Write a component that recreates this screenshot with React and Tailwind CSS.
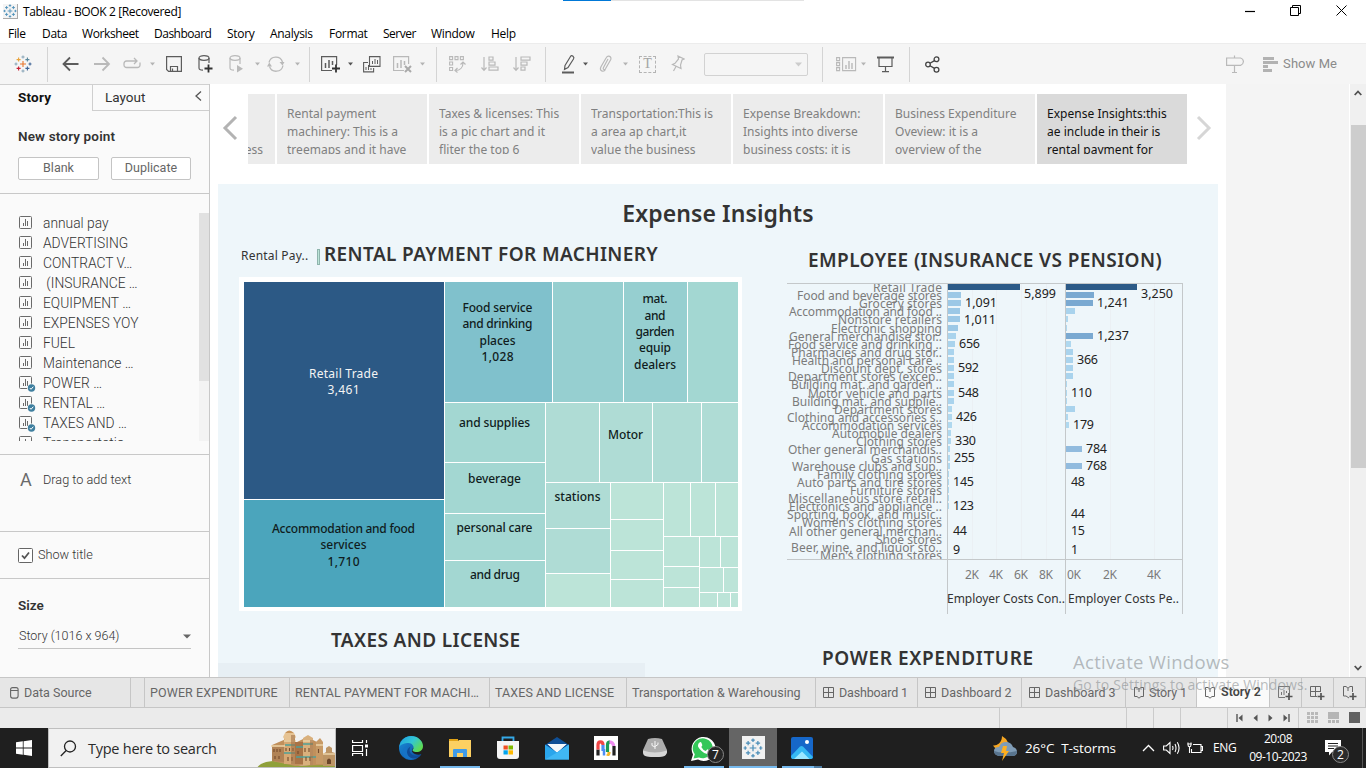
import React from "react";

/* ---------- small drawing helpers ---------- */

function Svg({ w, h, className = "", children }) {
  return (
    <svg width={w} height={h} viewBox={`0 0 ${w} ${h}`} fill="none" className={`block shrink-0 ${className}`}>
      {children}
    </svg>
  );
}

const Caret = ({ className = "", color = "#b4b4b4" }) => (
  <Svg w={5} h={4} className={className}><path d="M0 0.5h5L2.5 3.5z" fill={color} /></Svg>
);

const Sep = ({ className = "" }) => <div className={`h-[35px] w-px shrink-0 bg-[#d4d4d4] ${className}`} />;

function TableauMark({ size, colors, className = "" }) {
  const [a, b, c, d, e, f = a] = colors;
  const plus = (x, y, r, color, k) => (
    <path key={k} d={`M${x - r} ${y}h${2 * r}M${x} ${y - r}v${2 * r}`} stroke={color} strokeWidth="1.1" />
  );
  return (
    <svg width={size} height={size} viewBox="0 0 18 18" className={`block shrink-0 ${className}`}>
      {plus(9, 9, 3, a, 0)}
      {plus(9, 2, 1.6, b, 1)}
      {plus(9, 16, 1.6, b, 2)}
      {plus(2, 9, 1.5, b, 3)}
      {plus(16, 9, 1.5, c, 4)}
      {plus(4.6, 4.6, 2, f, 5)}
      {plus(13.4, 4.6, 2, d, 6)}
      {plus(4.6, 13.4, 2, e, 7)}
      {plus(13.4, 13.4, 2, c, 8)}
    </svg>
  );
}

/* ---------- title bar and menu ---------- */

function TitleBar() {
  return (
    <div className="relative flex h-[22px] items-center bg-white">
      <div className="ml-[3px] mt-[1px] border-b border-r border-[#aaa] bg-[#f4f4f4]">
        <TableauMark size={14} colors={["#4a8db8", "#4a8db8", "#4a8db8", "#4a8db8", "#4a8db8"]} />
      </div>
      <div className="ml-[5px] mt-[2px] whitespace-nowrap text-[12px] tracking-[-0.36px] text-black">Tableau - BOOK 2 [Recovered]</div>
      <div className="absolute left-[563px] top-0 flex h-[1px]">
        <div className="w-[48px] bg-[#0078d7]" />
        <div className="w-[193px] bg-[#e3e3e3]" />
      </div>
      <Svg w={11} h={11} className="ml-auto mr-[35px]"><path d="M1 5.5h10" stroke="#000" strokeWidth="1.2" /></Svg>
      <Svg w={11} h={11} className="mb-[2px] mr-[35px]">
        <path d="M2.5 2.5v-2h8v8h-2M.5 2.5h8v8h-8z" stroke="#000" />
      </Svg>
      <Svg w={11} h={11} className="mb-[2px] mr-[19px]"><path d="M.5 .5l10 10M10.5 .5l-10 10" stroke="#000" /></Svg>
    </div>
  );
}

function MenuBar() {
  return (
    <div className="flex h-[21px] items-center whitespace-nowrap bg-white pl-2 pt-[3px] text-[12px] tracking-[-0.3px] text-black">
      <span className="w-[34px]">File</span>
      <span className="w-[40px]">Data</span>
      <span className="w-[72px] tracking-[-0.4px]">Worksheet</span>
      <span className="w-[73px] tracking-[-0.5px]">Dashboard</span>
      <span className="w-[43px]">Story</span>
      <span className="w-[59px]">Analysis</span>
      <span className="w-[54px]">Format</span>
      <span className="w-[48px] tracking-[-0.5px]">Server</span>
      <span className="w-[60px]">Window</span>
      <span>Help</span>
    </div>
  );
}

/* ---------- toolbar ---------- */

function ToolBar() {
  const D = "#5c5c5c";
  const L = "#b9b9b9";
  return (
    <div className="flex h-[41px] items-center border-t border-[#ececec] bg-[#f5f5f5]">
      <TableauMark size={18} className="ml-[14px]" colors={["#e8762c", "#8aa7b8", "#3f6496", "#59879b", "#c72035", "#e8a33c"]} />
      <Sep className="ml-[15px]" />
      <Svg w={17} h={16} className="ml-[14px]"><path d="M16.5 8H1.5M8 1.5L1.5 8L8 14.5" stroke={D} strokeWidth="1.8" /></Svg>
      <Svg w={17} h={16} className="ml-[15px]"><path d="M0 8H15M8.5 1.5L15 8L8.5 14.5" stroke={L} strokeWidth="1.8" /></Svg>
      <Svg w={19} h={14} className="ml-[12px]">
        <path d="M6 10.5H3.5A2.5 2.5 0 0 1 1 8V6.5A2.500 2.500 0 0 1 3.500 4H14M11 1l3 3-3 3M17 5.500V8A2.500 2.500 0 0 1 14.500 10.500H5" stroke={L} strokeWidth="1.3" />
      </Svg>
      <Caret className="ml-[8px]" />
      <Svg w={16} h={16} className="ml-[11px]">
        <path d="M.6.6h14.800v14.800H2.600L.6 13.400zM4.500 15v-4.500h7V15M6.500 12.500V15" stroke={D} strokeWidth="1.2" />
      </Svg>
      <Svg w={16} h={18} className="ml-[16px]">
        <ellipse cx="6" cy="3" rx="5" ry="2.300" stroke={D} strokeWidth="1.200" />
        <path d="M1 3v10c0 1 1.500 2.200 4 2.200M11 3v5" stroke={D} strokeWidth="1.200" />
        <path d="M6.500 13.500h8M10.500 9.500v8" stroke="#333" strokeWidth="1.800" />
      </Svg>
      <Svg w={15} h={18} className="ml-[15px]">
        <ellipse cx="6" cy="3" rx="5" ry="2.300" stroke={L} strokeWidth="1.200" />
        <path d="M1 3v10c0 1 1.500 2.200 4 2.200M11 3v6" stroke={L} strokeWidth="1.200" />
        <path d="M8 10l6 3.700-6 3.800z" fill={L} />
      </Svg>
      <Caret className="ml-[11px]" />
      <Svg w={18} h={16} className="ml-[7px]">
        <path d="M2 6.500A7 7 0 0 1 15.500 6M16 9.500A7 7 0 0 1 2.500 10.500" stroke={L} strokeWidth="1.300" />
        <path d="M12.500 6h5l-2 3.500zM0 10.500h5l-2.700-4z" fill={L} />
      </Svg>
      <Caret className="ml-[10px]" />
      <Sep className="ml-[9px]" />
      <Svg w={20} h={18} className="ml-[11px]">
        <path d="M11 15.500H.6V1.600h15V10" stroke={D} strokeWidth="1.200" />
        <path d="M4.500 13V8M8 13V5M11.500 10V6" stroke={D} strokeWidth="1.500" />
        <path d="M11 13.500h8M15 9.500v8" stroke="#333" strokeWidth="1.800" />
      </Svg>
      <Caret className="ml-[7px]" color="#555" />
      <Svg w={18} h={17} className="ml-[10px]">
        <path d="M6.500.6h10.500v9.800H6.500zM5 6.500H.6v9.400h10V12" stroke={D} strokeWidth="1.100" />
        <path d="M9.500 8V5M12 8V3M14.500 8V4M3 14v-3M5.500 14v-5M8 14v-2" stroke={D} />
      </Svg>
      <Svg w={20} h={18} className="ml-[12px]">
        <path d="M11 15.500H.6V1.600h15V9" stroke={L} strokeWidth="1.200" />
        <path d="M4.500 13V8M8 13V5M11.500 10V6" stroke={L} strokeWidth="1.500" />
        <path d="M12 11l6 6M18 11l-6 6" stroke="#aaa" strokeWidth="2" />
      </Svg>
      <Caret className="ml-[7px]" />
      <Sep className="ml-[11px]" />
      <Svg w={17} h={17} className="ml-[12px]">
        <path d="M.6.6h3v3h-3zM6 .6h3v3H6zM11.400 .6h3v3h-3zM.6 6h3v3h-3zM.6 11.500h3v3h-3z" stroke={L} strokeWidth="1.100" />
        <path d="M6.500 14.500c4.500 0 7.500-3 7.500-7.500M11.500 8.500L14 6l2.500 2.500M8.500 12l-2.500 2.500 2.500 2" stroke={L} strokeWidth="1.200" />
      </Svg>
      <Svg w={18} h={16} className="ml-[15px]">
        <path d="M3 1v13M.5 11.500L3 14.300l2.500-2.800M8 1h4v3.200H8zM8 6h6v3.200H8zM8 11h9v3.200H8z" stroke={L} strokeWidth="1.200" />
      </Svg>
      <Svg w={18} h={16} className="ml-[14px]">
        <path d="M3 1v13M.5 11.500L3 14.300l2.500-2.800M8 1h9v3.200H8zM8 6h6v3.200H8zM8 11h4v3.200H8z" stroke={L} strokeWidth="1.200" />
      </Svg>
      <Sep className="ml-[14px]" />
      <Svg w={14} h={19} className="ml-[16px]">
        <path d="M3 10.500L8.500 1.500Q9.500 0 11 1.300T11.500 4L6 12.500l-3.500 2z" stroke={D} strokeWidth="1.200" />
        <path d="M0 17.500h12" stroke={D} strokeWidth="2" />
      </Svg>
      <Caret className="ml-[7px]" color="#555" />
      <Svg w={13} h={18} className="ml-[11px]">
        <path d="M9 4L4.500 12.500c-1 2 1 2.800 2 1.200L11.500 5c1.800-3.500-2.500-5.500-4.300-2.200L2 11.800c-2 4 2.500 6 4.500 2.700" stroke={L} strokeWidth="1.200" />
      </Svg>
      <Caret className="ml-[11px]" />
      <div className="ml-[11px] flex h-[17px] w-[17px] shrink-0 items-center justify-center border border-dashed border-[#b4b4b4] font-['Liberation_Serif',serif] text-[14px] leading-none text-[#a4a4a4]">T</div>
      <Svg w={14} h={18} className="ml-[15px]">
        <path d="M7 1l6 3-2 1-1.500 5 .5 3.500-8.500-4L4 8.300 7.500 4zM5 11.500L2.500 16" stroke={L} strokeWidth="1.200" />
      </Svg>
      <div className="ml-[19px] flex h-[23px] w-[104px] shrink-0 items-center justify-end rounded-[2px] border border-[#d2d2d2] pr-[5px]">
        <Svg w={7} h={5}><path d="M0 .5h7L3.500 4.500z" fill="#ccc" /></Svg>
      </div>
      <Sep className="ml-[14px]" />
      <Svg w={21} h={15} className="ml-[13px]">
        <path d="M.6.6h3v3h-3zM.6 5.600h3v3h-3zM.6 10.600h3v3h-3zM6.600.6h13v13h-13z" stroke={L} strokeWidth="1.100" />
        <path d="M10 12V8M13 12V4M16 12V6" stroke={L} strokeWidth="1.400" />
      </Svg>
      <Caret className="ml-[4px]" />
      <Svg w={17} h={17} className="ml-[11px]">
        <path d="M0 1.500h17" stroke={D} strokeWidth="2" />
        <path d="M2 2v8.500h13V2M8.500 11v5M5 15.700h7" stroke={D} strokeWidth="1.200" />
      </Svg>
      <Sep className="ml-[15px]" />
      <Svg w={15} h={17} className="ml-[15px]">
        <g stroke="#444" strokeWidth="1.300">
          <circle cx="3" cy="8.500" r="2.300" /><circle cx="11.500" cy="3.300" r="2.400" /><circle cx="11.500" cy="13.700" r="2.400" />
          <path d="M5 7.300l4.500-2.700M5 9.700l4.500 2.700" />
        </g>
      </Svg>
      <Svg w={18} h={18} className="ml-auto">
        <path d="M.6 3h14q3 1 2.800 3.700-.2 2.700-2.800 3.700H.6zM8.500 .5V3M8.500 10.500v7M6 17.500h5" stroke={L} strokeWidth="1.200" />
      </Svg>
      <Svg w={15} h={15} className="ml-[19px]">
        <path d="M0 0h11v3H0zM0 4h15v3H0zM0 8h5v3H0zM0 12h9v3H0z" fill="#b2b2b2" />
      </Svg>
      <span className="ml-[5px] mr-[29px] whitespace-nowrap font-['Roboto',sans-serif] text-[13px] tracking-[0.05px] text-[#8b8b8b]">Show Me</span>
    </div>
  );
}

/* ---------- side pane ---------- */

const sheets = [
  ["annual pay"], ["ADVERTISING"], ["CONTRACT V…"], ["\u00a0(INSURANCE …"], ["EQUIPMENT …"], ["EXPENSES YOY"],
  ["FUEL"], ["Maintenance …"], ["POWER …", true], ["RENTAL …", true], ["TAXES AND …", true], ["Transportatio…"],
];

const SheetIcon = ({ used }) => (
  <Svg w={18} h={18}>
    <rect x="1.500" y="2.500" width="12" height="12" rx="1" stroke="#6a6a6a" />
    <path d="M5.500 12V9M7.500 12V5M9.500 12V7" stroke="#6a6a6a" />
    {used && <g><circle cx="13.500" cy="14" r="4.500" fill="#fafafa" /><circle cx="13.500" cy="14" r="3.700" fill="#3f7f9f" /><path d="M11.800 14l1.200 1.300 2.300-2.600" stroke="#fff" /></g>}
  </Svg>
);

function SidePane() {
  return (
    <div className="flex w-[210px] shrink-0 flex-col border-r border-[#c8c8c8] bg-[#fafafa] font-['Roboto',sans-serif] font-light text-[#333]">
      <div className="flex h-[27px] border-t border-[#d0d0d0] text-[13.5px]">
        <div className="w-[92px] pl-[18px] pt-[2px] font-bold tracking-[0.2px] text-[#111]">Story</div>
        <div className="flex flex-1 items-start justify-between border-b border-l border-[#cfcfcf] pl-[12px] pt-[2px] text-[13.500px] font-normal">
          <span>Layout</span>
          <Svg w={7} h={10} className="mr-[7px] mt-[4px]"><path d="M6 .5L1 5l5 4.500" stroke="#555" strokeWidth="1.300" /></Svg>
        </div>
      </div>
      <div className="mt-[15px] h-[21px] pl-[18px] text-[13.500px] font-semibold leading-[20px] tracking-[0.15px] text-[#333]">New story point</div>
      <div className="mt-[10px] flex gap-[12px] pl-[18px] text-[12.500px] font-normal text-[#666]">
        <div className="h-[23px] w-[81px] rounded-[2px] border border-[#c4c4c4] bg-white text-center leading-[20px]">Blank</div>
        <div className="h-[23px] w-[80px] rounded-[2px] border border-[#c4c4c4] bg-white text-center leading-[20px]">Duplicate</div>
      </div>
      <div className="mt-[13px] flex h-[262px] border-b border-t border-[#c8c8c8] pb-[13px] pt-[19px]">
        <div className="flex-1 overflow-hidden pl-[18px]">
          {sheets.map(([name, used]) => (
            <div key={name} className="flex h-[20px] items-center whitespace-nowrap text-[13.800px]">
              <SheetIcon used={used} />
              <span className="ml-[7px] mt-[1px]">{name}</span>
            </div>
          ))}
        </div>
        <div className="w-[10px] bg-[#f3f3f3]"><div className="h-[168px] bg-[#e1e1e1]" /></div>
      </div>
      <div className="flex h-[77px] items-start border-b border-[#c8c8c8] pl-[20px] pt-[15px] text-[12.700px] leading-[20px]">
        <span className="w-[23px] text-[18px] font-normal text-[#6a6a6a]">A</span>
        <span>Drag to add text</span>
      </div>
      <div className="flex h-[47px] items-center border-b border-[#c8c8c8] pl-[18px] text-[12.700px]">
        <Svg w={15} h={15}><rect x=".5" y=".5" width="14" height="14" rx="1" stroke="#666" fill="#fff" /><path d="M4 7.500l2.500 2.700L11 4.500" stroke="#555" strokeWidth="1.800" /></Svg>
        <span className="ml-[5px]">Show title</span>
      </div>
      <div className="mt-[16px] pl-[18px] text-[13.500px] font-semibold leading-[20px]">Size</div>
      <div className="ml-[18px] mt-[10px] flex h-[24px] w-[173px] items-center justify-between border-b border-[#c4c4c4] pl-[1px] text-[12.500px]">
        <span>Story (1016 x 964)</span>
        <Svg w={8} h={5}><path d="M0 .5h8L4 4.500z" fill="#666" /></Svg>
      </div>
    </div>
  );
}

/* ---------- story navigator ---------- */

const points = [
  ["Rental payment", "machinery: This is a", "treemaps and it have"],
  ["Taxes & licenses: This", "is a pic chart and it", "fliter the top 6"],
  ["Transportation:This is", "a area ap chart,it", "value the business"],
  ["Expense Breakdown:", "Insights into diverse", "business costs: it is"],
  ["Business Expenditure", "Oveview: it is a", "overview of the"],
  ["Expense Insights:this", "ae include in their is", "rental payment for"],
];

function Navigator() {
  return (
    <div className="flex h-[100px] pt-[10px] font-['Noto_Sans',sans-serif] text-[12px] leading-[18px]">
      <Svg w={16} h={26} className="ml-[12px] mt-[21px]"><path d="M14 2L3 13l11 11" stroke="#b3b3b3" strokeWidth="3" /></Svg>
      <div className="ml-[10px] flex h-[70px] gap-[2px]">
        <div className="w-[27px] overflow-hidden bg-[#ececec] pt-[11px] text-[#808080]">
          <div className="mt-[36px] flex h-[13px] w-[15px] justify-end overflow-hidden">ess</div>
        </div>
        {points.map((lines, i) => (
          <div key={i} className={i === 5 ? "w-[150px] bg-[#dadada] pl-[10px] pt-[11px] text-[#111]" : "w-[150px] bg-[#ececec] pl-[10px] pt-[11px] text-[#808080]"}>
            <div className="h-[49px] overflow-hidden whitespace-nowrap tracking-[0.02px]">
              {lines.map((l) => <div key={l}>{l}</div>)}
            </div>
          </div>
        ))}
      </div>
      <Svg w={16} h={26} className="ml-[9px] mt-[21px]"><path d="M2 2l11 11L2 24" stroke="#d6d6d6" strokeWidth="3" /></Svg>
    </div>
  );
}

/* ---------- treemap ---------- */

const C = { a: "#2c5985", b: "#4ba5bc", c: "#80c1cc", d: "#96cfd0", e: "#a3d7d2", f: "#afdcd5", g: "#bce4d8" };

// left, top, right, bottom, colour
const cells = [
  [244, 282, 444, 499, C.a], [244, 500, 444, 607, C.b], [445, 282, 552, 402, C.c], [553, 282, 623, 402, C.d],
  [624, 282, 687, 402, C.d], [688, 282, 738, 402, C.e], [445, 403, 545, 462, C.e], [445, 463, 545, 513, C.e],
  [445, 514, 545, 560, C.e], [445, 561, 545, 607, C.e], [546, 403, 599, 482, C.f], [600, 403, 652, 482, C.f],
  [653, 403, 701, 482, C.f], [702, 403, 738, 482, C.f], [546, 483, 610, 528, C.f], [546, 529, 610, 573, C.f],
  [546, 574, 610, 607, C.g], [611, 483, 663, 519, C.g], [611, 520, 663, 550, C.g], [611, 551, 663, 579, C.g],
  [611, 580, 663, 607, C.g], [664, 483, 690, 536, C.g], [691, 483, 715, 536, C.g], [716, 483, 738, 536, C.g],
  [664, 537, 699, 566, C.g], [664, 567, 699, 587, C.g], [664, 588, 699, 607, C.g], [700, 537, 720, 567, C.g],
  [721, 537, 738, 567, C.g], [700, 568, 723, 592, C.g], [724, 568, 738, 592, C.g], [700, 593, 717, 607, C.g],
  [718, 593, 730, 607, C.g], [731, 593, 738, 607, C.g],
];

// centre x, baseline, width, text
const cellLabels = [
  [343.5, 378, 69, "Retail Trade", "#f4f4f4"], [343.5, 394, 32, "3,461", "#f4f4f4"],
  [343.5, 533, 143, "Accommodation and food"], [343.5, 549, 46, "services"], [343.5, 566, 32, "1,710"],
  [497.5, 312, 70, "Food service"], [497.5, 328, 70, "and drinking"], [497.5, 345, 36, "places"], [497.5, 361, 32, "1,028"],
  [655, 303, 25, "mat."], [655, 320, 21, "and"], [655, 336, 39, "garden"], [655, 352, 32, "equip"], [655, 369, 42, "dealers"],
  [494.5, 427, 71, "and supplies"], [494.5, 483, 53, "beverage"], [494.5, 532, 76, "personal care"], [495, 579, 50, "and drug"],
  [625.5, 439, 35, "Motor"], [577.5, 501, 46, "stations"],
];

function Treemap() {
  return (
    <svg width="503" height="334" viewBox="239 277 503 334" className="block bg-white font-['Noto_Sans',sans-serif] text-[12px]">
      {cells.map(([l, t, r, b, fill], i) => <rect key={i} x={l} y={t} width={r - l} height={b - t} fill={fill} />)}
      {cellLabels.map(([x, y, w, text, fill = "#101c20"]) => (
        <text key={text + y} x={x - w / 2} y={y} textLength={w} fill={fill} fontWeight={fill === "#101c20" ? 500 : 400}>{text}</text>
      ))}
    </svg>
  );
}

/* ---------- bar chart ---------- */

// name, left edge of label, insurance bar, pension bar
const rows = [
  ["Retail Trade", 873, 72, 71], ["Food and beverage stores", 797, 13, 28], ["Grocery stores", 859, 13, 27],
  ["Accommodation and food ..", 789, 12, 9], ["Nonstore retailers", 838, 12, 2], ["Electronic shopping", 831, 10, 1],
  ["General merchandise stor..", 789, 8, 27], ["Food service and drinking ..", 788, 7, 5], ["Pharmacies and drug stor..", 791, 6, 7],
  ["Health and personal care ..", 792, 6, 7], ["Discount dept. stores", 821, 6, 7], ["Department stores (excep..", 788, 6, 7],
  ["Building mat. and garden ..", 791, 6, 1], ["Motor vehicle and parts", 808, 6, 1], ["Building mat. and supplie..", 792, 6, 1],
  ["Department stores", 834, 4, 9], ["Clothing and accessories s..", 787, 4, 2], ["Accommodation services", 802, 4, 3],
  ["Automobile dealers", 832, 3, 0], ["Clothing stores", 856, 3, 0], ["Other general merchandis..", 788, 2, 16],
  ["Gas stations", 871, 2, 0], ["Warehouse clubs and sup..", 792, 2, 16], ["Family clothing stores", 817, 1, 0],
  ["Auto parts and tire stores", 797, 1, 0], ["Furniture stores", 850, 1, 0], ["Miscellaneous store retail..", 788, 1, 0],
  ["Electronics and appliance ..", 789, 1, 0], ["Sporting, book, and  music..", 787, 0, 0], ["Women's clothing stores", 802, 0, 0],
  ["All other general merchan..", 789, 0, 0], ["Shoe stores", 876, 0, 0], ["Beer, wine, and liquor sto..", 791, 0, 0],
  ["Men's clothing stores", 820, 0, 0],
];

// left, centre y, width, text
const values = [
  [1024, 294, 32, "5,899"], [965, 303, 32, "1,091"], [964, 320, 32, "1,011"], [959, 344, 21, "656"], [958, 368, 21, "592"],
  [958, 393, 21, "548"], [956, 417, 21, "426"], [955, 441, 21, "330"], [954, 458, 21, "255"], [953, 482, 21, "145"],
  [953, 506, 21, "123"], [953, 531, 14, "44"], [953, 550, 7, "9"], [1141, 294, 32, "3,250"], [1097, 303, 32, "1,241"],
  [1097, 336, 32, "1,237"], [1077, 360, 21, "366"], [1071, 393, 21, "110"], [1073, 425, 21, "179"], [1086, 449, 21, "784"],
  [1086, 466, 21, "768"], [1071, 482, 14, "48"], [1071, 514, 14, "44"], [1071, 531, 14, "15"], [1071, 550, 7, "1"],
];

const ticks = [[965, 14, "2K"], [989, 14, "4K"], [1014, 14, "6K"], [1039, 14, "8K"], [1067, 14, "0K"], [1103, 14, "2K"], [1147, 14, "4K"]];

const shade = (w) => (w > 60 ? "#2c5a87" : w > 20 ? "#7aa9d1" : w > 14 ? "#91bbde" : w > 9 ? "#9cc8e6" : w > 5 ? "#a9d3ed" : "#afd8ef");

function BarChart() {
  return (
    <svg width="396" height="331" viewBox="787 283 396 331" className="block font-['Noto_Sans',sans-serif]">
      <path d="M972.500 284v275M996.500 284v275M1021.500 284v275M1046.500 284v275M1110.500 284v275M1154.500 284v275" stroke="#ebf0f4" />
      <clipPath id="plot"><rect x="780" y="284" width="403" height="275" /></clipPath>
      <g clipPath="url(#plot)">
        {rows.map(([name, left, a, b], i) => {
          const y = 284 + Math.round(i * 8.12);
          return (
            <g key={name}>
              <rect x="948" y={y} width={a} height="6" fill={shade(a)} />
              <rect x="1066" y={y} width={b} height="6" fill={shade(b)} />
              <text x={left} y={y + 8} textLength={942 - left} fontSize="12" fill="#7b7b7b">{name}</text>
            </g>
          );
        })}
      </g>
      {values.map(([x, y, w, t]) => <text key={x + "-" + y} x={x} y={y + 4} textLength={w} fontSize="12.500" fill="#222">{t}</text>)}
      <path d="M787 283.500h396M787 559.500h396M947.500 283v331M1065.500 283v331M1182.500 283v331" stroke="#c4c8ca" />
      {ticks.map(([x, w, t]) => <text key={x} x={x} y="579" textLength={w} fontSize="12" fill="#7a7a7a">{t}</text>)}
      <text x="947" y="603" textLength="118" fontSize="12" fill="#333">Employer Costs Con..</text>
      <text x="1068" y="603" textLength="111" fontSize="12" fill="#333">Employer Costs Pe..</text>
    </svg>
  );
}

/* ---------- dashboard canvas ---------- */

function Canvas() {
  return (
    <div className="mx-[8px] h-[493px] w-[1000px] overflow-hidden bg-[#eef6fa] font-['Noto_Sans',sans-serif] text-[#333]">
      <div className="h-[60px] pt-[11px] text-center text-[23px] font-semibold leading-[36px] tracking-[0.1px]">Expense Insights</div>
      <div className="flex">
        <div className="w-[569px]">
          <div className="flex h-[33px] items-start pl-[23px]">
            <span className="w-[76px] whitespace-nowrap pt-[3px] text-[12px] leading-[18px] tracking-[0.2px]">Rental Pay..</span>
            <span className="mt-[5px] h-[16px] w-[3px] border border-[#8fb5ad] bg-[#bce4d8]" />
            <span className="ml-[4px] whitespace-nowrap text-[19px] font-semibold leading-[20px] tracking-[0.38px]">RENTAL PAYMENT FOR MACHINERY</span>
          </div>
          <div className="pl-[21px]"><Treemap /></div>
          <div className="mt-[17px] pl-[113px] text-[19px] font-semibold leading-[24px] tracking-[0.37px]">TAXES AND LICENSE</div>
          <div className="mt-[11px] h-[14px] w-[427px] bg-[#e7eff4]" />
        </div>
        <div className="w-[431px]">
          <div className="h-[39px] whitespace-nowrap pl-[21px] pt-[4px] text-[19px] font-semibold leading-[24px] tracking-[0.41px]">EMPLOYEE (INSURANCE VS PENSION)</div>
          <BarChart />
          <div className="mt-[32px] pl-[35px] text-[19px] font-semibold leading-[24px] tracking-[0.62px]">POWER EXPENDITURE</div>
        </div>
      </div>
    </div>
  );
}

/* ---------- sheet tabs ---------- */

const GridIcon = () => <Svg w={11} h={11}><path d="M.5.5h10v10H.5zM5.500.5v10M.5 5.500h10" stroke="#666" /></Svg>;
const BookIcon = () => <Svg w={12} h={13}><path d="M1.500 1.500H4L6 3.200 8 1.500h2.500v9H8L6 12.200 4 10.500H1.500zM6 3.200V6" stroke="#666" /></Svg>;
const Plus = () => <path d="M7.500 10.500h7M11 7v7" stroke="#555" strokeWidth="1.700" />;

function SheetTabs() {
  const tab = "flex shrink-0 items-center whitespace-nowrap border-r border-[#c6c6c6]";
  return (
    <div className="flex h-[31px] border-b border-t border-[#c6c6c6] bg-[#e6e6e6] font-['Roboto',sans-serif] text-[12.500px] text-[#666]">
      <div className={`${tab} w-[131px] pl-[10px]`}>
        <Svg w={9} h={12}><rect x=".6" y=".6" width="7.500" height="10.500" rx="2" stroke="#666" strokeWidth="1.100" /><path d="M.6 3.500h7.500" stroke="#666" /></Svg>
        <span className="ml-[5px] mt-[1px]">Data Source</span>
      </div>
      <div className={`${tab} w-[14px]`} />
      <div className={`${tab} w-[145px] pl-[5px] pt-[1px] tracking-[0.1px]`}>POWER EXPENDITURE</div>
      <div className={`${tab} w-[200px] pl-[5px] pt-[1px] tracking-[0.08px]`}>RENTAL PAYMENT FOR MACHI…</div>
      <div className={`${tab} w-[137px] pl-[5px] pt-[1px] tracking-[0.08px]`}>TAXES AND LICENSE</div>
      <div className={`${tab} w-[189px] pl-[5px] pt-[1px]`}>Transportation &amp; Warehousing</div>
      <div className={`${tab} w-[102px] gap-[5px] pl-[7px]`}><GridIcon /><span className="mt-[1px] tracking-[-0.15px]">Dashboard 1</span></div>
      <div className={`${tab} w-[104px] gap-[5px] pl-[7px]`}><GridIcon /><span className="mt-[1px]">Dashboard 2</span></div>
      <div className={`${tab} w-[104px] gap-[5px] pl-[7px]`}><GridIcon /><span className="mt-[1px]">Dashboard 3</span></div>
      <div className={`${tab} w-[71px] gap-[4px] pl-[7px]`}><BookIcon /><span className="mt-[1px] tracking-[-0.15px]">Story 1</span></div>
      <div className={`${tab} w-[73px] gap-[5px] bg-[#fafafa] pl-[7px] font-semibold text-[#444]`}><BookIcon /><span>Story 2</span></div>
      <div className={`${tab} w-[32px] justify-center pt-[2px]`}>
        <Svg w={15} h={15}><path d="M7 11.500H.5V.5h11V7M3.500 9V6M6 9V4M8.500 7V5" stroke="#777" /><Plus /></Svg>
      </div>
      <div className={`${tab} w-[32px] justify-center pt-[2px]`}>
        <Svg w={15} h={15}><path d="M7 10.500H.5V.5h10V6M5.500.5v10M.5 5.500h10" stroke="#666" /><Plus /></Svg>
      </div>
      <div className={`${tab} w-[32px] justify-center pt-[2px]`}>
        <Svg w={15} h={15}><path d="M7 12L4 10H1.500V.5H4L6 2.200 8 .5h2.500V6M6 2.200V5" stroke="#666" /><Plus /></Svg>
      </div>
    </div>
  );
}

function StatusBar() {
  const cell = "shrink-0 border-r border-[#cbcbcb]";
  return (
    <div className="flex h-[20px] bg-[#ebebeb]">
      <div className={`${cell} w-[1000px]`} />
      <div className={`${cell} w-[127px]`} />
      <div className={`${cell} w-[27px]`} />
      <div className={`${cell} w-[27px]`} />
      <div className={`${cell} w-[47px]`} />
      <div className={`${cell} flex w-[71px] items-center justify-between px-[8px] pb-[1px]`}>
        <Svg w={7} h={8}><path d="M1 0v8" stroke="#555" strokeWidth="1.400" /><path d="M6.500 .5v7L2.500 4z" fill="#555" /></Svg>
        <Svg w={5} h={8}><path d="M4.500 .5v7L.5 4z" fill="#555" /></Svg>
        <Svg w={5} h={8}><path d="M.5 .5v7L4.500 4z" fill="#555" /></Svg>
        <Svg w={7} h={8}><path d="M6 0v8" stroke="#555" strokeWidth="1.400" /><path d="M.5 .5v7L4.500 4z" fill="#555" /></Svg>
      </div>
      <div className="flex flex-1 items-center justify-between pb-[1px] pl-[8px] pr-[6px]">
        <Svg w={11} h={11}>{[0, 4, 8].map((y) => [0, 4, 8].map((x) => <rect key={x + y * 9} x={x} y={y} width="3" height="3" fill="#b9b9b9" />))}</Svg>
        <Svg w={11} h={11}><path d="M0 0h11v7H0zM0 8h3v3H0zM4 8h3v3H4zM8 8h3v3H8z" fill="#b5b5b5" /></Svg>
        <Svg w={11} h={11}><path d="M0 0h11v11H0z" fill="#616161" /></Svg>
      </div>
    </div>
  );
}

/* ---------- taskbar ---------- */

function Castle() {
  return (
    <svg width="80" height="38" viewBox="256 729 80 38" className="block shrink-0">
      <path d="M258 768q3-6 16-7 14 0 28 5l34-4v6z" fill="#8fa03a" />
      <path d="M273 745l14-6 9 4 12-6 10 5 6 6v17l-28 1-23-5z" fill="#c0905c" />
      <path d="M273 747h13v15l-13-1z" fill="#b08255" />
      <path d="M285 737h11v27h-11z" fill="#d6a873" />
      <path d="M286 733h9l2 4-2 3h-9l-2-3z" fill="#e6c393" />
      <path d="M286 733q4-5 9 0z" fill="#c79358" />
      <path d="M304 738l5-3 5 3v27h-10z" fill="#d9b07c" />
      <path d="M296 742h8v22h-8z" fill="#a87346" />
      <path d="M317 742l4-4 3 4v22h-7z" fill="#c79a66" />
      <path d="M324 754l3-2v-4l3-2 3 2v4l3 1v13h-12z" fill="#bd9565" />
      <path d="M286 745h10M285 753h11M297 747h7M304 744h10M297 757h20" stroke="#4fa098" strokeWidth="1.300" />
      <path d="M272 746h14M285 741h12M304 741h10M317 745h7M324 754h12" stroke="#ecd2a6" strokeWidth="1.400" />
      <path d="M275 749v3M278 749v3M281 749v3M287 748v3M290.500 748v3M294 748v3M306 748v4M310 748v4M299 751v3M319.500 749v4M276 756v3M280 756v3M289 757v4M293 757v4M307 757v4M311 757v4" stroke="#754b2d" strokeWidth="1.100" />
      <path d="M328 764v-4q2-3 4 0v4z" fill="#6b4529" />
      <path d="M292 735v29h4v-29zM311 740v25h3v-25z" fill="#9c6b43" opacity=".55" />
    </svg>
  );
}

function TaskBar() {
  return (
    <div className="flex h-[40px] items-center bg-[#1f1f1f] text-white">
      <Svg w={16} h={16} className="ml-[16px]"><path d="M0 2.300l6.800-1v6.200H0zM7.600 1.200L16 0v7.500H7.600zM0 8.400h6.800v6.300L0 13.700zM7.600 8.400H16V16l-8.400-1.200z" fill="#fff" /></Svg>
      <div className="ml-[16px] flex h-[40px] w-[288px] items-center border border-[#bfbfbf] bg-[#f1f1f1]">
        <Svg w={17} h={17} className="ml-[11px]"><circle cx="10" cy="6.500" r="5.500" stroke="#222" strokeWidth="1.300" /><path d="M6.200 10.500L.8 16" stroke="#222" strokeWidth="1.300" /></Svg>
        <span className="ml-[11px] w-[167px] whitespace-nowrap pt-[1px] text-[14.500px] tracking-[-0.25px] text-[#2b2b2b]">Type here to search</span>
        <Castle />
      </div>
      <Svg w={17} h={16} className="ml-[16px]">
        <path d="M.6 0v2.500h9.900V0M.6 5.500h9.900v6H.6zM.6 16v-2.500h9.900V16M14.500 0v3M14.500 9v7" stroke="#fff" strokeWidth="1.200" />
        <rect x="13" y="4.500" width="3" height="3" fill="#fff" />
      </Svg>
      <Svg w={24} h={24} className="ml-[30px]">
        <defs>
          <linearGradient id="edgeTop" x1="0" y1="0" x2="1" y2=".6"><stop stopColor="#1b9ee2" /><stop offset=".55" stopColor="#33c6d4" /><stop offset="1" stopColor="#5edb52" /></linearGradient>
          <linearGradient id="edgeLow" x1="0" y1="0" x2="1" y2="1"><stop stopColor="#1b8fdc" /><stop offset="1" stopColor="#0c4a9c" /></linearGradient>
        </defs>
        <circle cx="12" cy="12" r="12" fill="url(#edgeLow)" />
        <path d="M24 17.500C21 19.500 15 19 13 15.500L14 12l10.500-2z" fill="#1f1f1f" />
        <path d="M.3 11C1.500 3.500 7 0 12 0c7 0 12 5 12 10 0 4-3 6-6.500 6-3 0-4.500-1-3.500-2.500C16 10.500 13 7 9.500 7 6 7 2 8 .3 11z" fill="url(#edgeTop)" />
        <path d="M9.500 9.500q-3 4-1 8.500 3 5.500 9 4-5 3-10.500.500Q1 18 5 12q2-2.500 4.500-2.500z" fill="#1673c6" />
        <path d="M11.500 10.500q-2.500 5 1.500 8 4 2.500 9 0-3.500 4-8 4-5-1-6-6 0-4 3.500-6z" fill="#0f4c98" />
      </Svg>
      <div className="ml-[17px] flex h-[40px] w-[40px] flex-col items-center">
        <Svg w={24} h={22} className="mt-[10px]">
          <path d="M1 1h9v3H1z" fill="#e2a317" /><path d="M1 3h9l1-1h12v17H1z" fill="#fcd062" />
          <path d="M5 19v-7q0-1 1-1h12q1 0 1 1v7h-4v-4H9v4z" fill="#3f9be8" />
        </Svg>
        <div className="mt-auto h-[2px] w-full bg-[#76b9ed]" />
      </div>
      <Svg w={24} h={24} className="ml-[16px]">
        <path d="M6.500 6V1.500h11V6" stroke="#35a9e8" strokeWidth="1.800" />
        <path d="M1 5h22v15q0 3-3 3H4q-3 0-3-3z" fill="#f5f5f5" />
        <path d="M7.500 9.500h4.300v4H7.500z" fill="#f25022" /><path d="M12.500 9.500H17v4h-4.500z" fill="#7fba00" /><path d="M7.500 14.300h4.300v4.200H7.500z" fill="#00a4ef" /><path d="M12.500 14.300H17v4.200h-4.500z" fill="#ffb900" />
      </Svg>
      <Svg w={24} h={23} className="ml-[25px]">
        <path d="M0 8L12 0l12 8v14H0z" fill="#0f4f96" /><path d="M2.500 7h19l-9.500 9z" fill="#f4f8fb" />
        <path d="M0 7.500l12 8 12-8v15H0z" fill="#2aa6ec" /><path d="M2.500 7h19L12 15z" fill="#f4f8fb" /><path d="M0 22.500L12 15.500l12-8v15z" fill="#40b8f5" />
      </Svg>
      <div className="ml-[25px] flex h-[24px] w-[24px] items-center justify-center bg-white">
        <Svg w={20} h={17}>
          <g strokeWidth="3.200">
            <path d="M2 15.500V9.500" stroke="#222" /><path d="M2 9.500V5Q2 1.800 4.500 1.800T7 5" stroke="#f04747" />
            <path d="M7 5v6" stroke="#4d8df5" /><path d="M8 9v6.500" stroke="#4d8df5" strokeWidth="2.500" />
            <path d="M11 14q2 1.500 2-2" stroke="#f4b528" /><path d="M11.500 12V5q0-3 2.500-3.200" stroke="#1b9c56" />
            <path d="M13.500 1.800Q17 2 17.800 6" stroke="#ee8df0" /><path d="M18 6v9.500" stroke="#222" />
          </g>
        </Svg>
      </div>
      <Svg w={24} h={20} className="ml-[25px]">
        <path d="M5 1q7-2 14 0l5 11q0 5-4 6-8 2-16 0-4-1-4-6z" fill="#adadad" /><path d="M0 12.500q12 4 24 0v2q-1 3.500-4 4-8 1-16 0-4-.5-4-4z" fill="#d6d6d6" />
        <path d="M12 3v8M9 5v2.500l3 1.500M15 4.500v2L12 8.500" stroke="#f8f8f8" />
      </Svg>
      <div className="ml-[17px] flex h-[40px] w-[40px] flex-col items-center">
        <div className="relative mt-[8px]">
          <Svg w={26} h={26}>
            <path d="M0 25l2-6.500A12 12 0 1 1 7 23.500z" fill="#fff" />
            <path d="M2.500 22.500l1.300-4.200A10 10 0 1 1 8 21.500z" fill="#34c759" />
            <path d="M8.500 6.500q1.500-1 2 .5l.8 2q.2.700-1 2 1.500 3 4.500 4l1.500-1.700 3 1.500q.5 2.700-2.300 3.200-3 .5-6.700-3.200T7 9.500q0-1.800 1.500-3z" fill="#fff" />
          </Svg>
          <div className="absolute left-[16px] top-[10px] flex h-[17px] w-[17px] items-center justify-center rounded-full border border-[#888] bg-[#262626] text-[12px] leading-none">7</div>
        </div>
        <div className="mt-auto h-[2px] w-full bg-[#76b9ed]" />
      </div>
      <div className="ml-[5px] flex h-[40px] w-[48px] flex-col items-center bg-[#656565]">
        <div className="mt-[8px] flex h-[23px] w-[23px] items-center justify-center bg-[#f1f1f1]"><TableauMark size={20} colors={["#4a8db8", "#4a8db8", "#4a8db8", "#4a8db8", "#4a8db8"]} /></div>
        <div className="mt-auto h-[2px] w-full bg-[#76b9ed]" />
      </div>
      <div className="ml-[5px] flex h-[40px] w-[40px] flex-col items-center">
        <Svg w={22} h={23} className="mt-[9px]">
          <rect width="22" height="22" rx="2" fill="#1667c9" /><path d="M0 19L9 9.500q1.500-1 3 0L22 20q-.5 2-2 2H2q-2 0-2-3z" fill="#35b8f2" /><path d="M3 22l8-7.500 7.500 7.500z" fill="#9ae7ff" /><circle cx="16" cy="5" r="2" fill="#fff" />
        </Svg>
        <div className="mt-auto flex h-[2px] w-full bg-[#76b9ed]"><div className="ml-auto w-[8px] bg-[#4f7da3]" /></div>
      </div>
      <Svg w={25} h={25} className="ml-auto">
        <path d="M9 0q0 5-3 7.500T0 9.500q3 5 9 4 6-2 6-7Q13 2 9 0z" fill="#f5a623" />
        <path d="M6 20q-5-1-5-5 0-4 5-4 2-5 7-5t7 5q4 1 4 5t-5 4z" fill="#7f9cb6" /><path d="M6 20q-5-1-5-5 9 3 23 0 0 5-5 5z" fill="#58748e" />
        <path d="M14 10h-4l-2 7h3l-2 8 7-10h-3z" fill="#ffb020" />
      </Svg>
      <span className="ml-[7px] w-[117px] whitespace-nowrap text-[13.500px] tracking-[-0.1px]">26°C&nbsp; T-storms</span>
      <Svg w={13} h={8}><path d="M1 7l5.500-5.500L12 7" stroke="#fff" strokeWidth="1.300" /></Svg>
      <Svg w={17} h={14} className="ml-[8px]"><path d="M.6 5h2.700L7 1.500v11L3.300 9H.6zM9.500 5q1 2 0 4M12 3q2 4 0 8M14.300 1.200q3.500 5.800 0 11.600" stroke="#fff" strokeWidth="1.100" /></Svg>
      <Svg w={16} h={14} className="ml-[7px]"><path d="M6 3.500h8v8H4.500V8M14 5.500h1.500v4H14M1 1.500v2.300q0 2 1.500 2t1.500-2V1.500M.3 3h4.500M2.500 6v6" stroke="#fff" strokeWidth="1.100" /></Svg>
      <span className="ml-[10px] w-[34px] text-[12px] tracking-[-0.4px]">ENG</span>
      <div className="w-[62px] whitespace-nowrap text-center text-[12px] leading-[18px] tracking-[-0.5px]"><div>20:08</div><div>09-10-2023</div></div>
      <div className="relative ml-[16px]">
        <Svg w={16} h={16}><path d="M0 0h16v12H7l-3 3.500V12H0z" fill="#fff" /><path d="M3 3.500h10M3 6h10M3 8.500h6" stroke="#222" /></Svg>
        <div className="absolute left-[7px] top-[6px] flex h-[17px] w-[17px] items-center justify-center rounded-full border border-[#888] bg-[#2b2b2b] text-[12px] leading-none">2</div>
      </div>
      <div className="ml-[21px] mr-[3px] h-[40px] w-px bg-[#555]" />
    </div>
  );
}

/* ---------- page ---------- */

export default function App() {
  return (
    <div className="relative flex h-[768px] w-[1366px] flex-col overflow-hidden bg-white font-['Open_Sans','Noto_Sans',sans-serif]">
      <TitleBar />
      <MenuBar />
      <ToolBar />
      <div className="flex h-[593px]">
        <SidePane />
        <div className="w-[1016px] bg-white">
          <Navigator />
          <Canvas />
        </div>
        <div className="w-[123px] bg-[#f4f4f4]" />
        <div className="ml-[1px] flex flex-1 flex-col items-center bg-[#f0f0f0]">
          <Svg w={8} h={6} className="mt-[6px]"><path d="M.7 5L4 1.500 7.300 5" stroke="#505050" strokeWidth="1.800" /></Svg>
          <div className="mt-[29px] h-[343px] w-[15px] bg-[#cdcdcd]" />
          <Svg w={8} h={6} className="mb-[6px] mt-auto"><path d="M.7 1L4 4.500 7.300 1" stroke="#505050" strokeWidth="1.800" /></Svg>
        </div>
      </div>
      <SheetTabs />
      <StatusBar />
      <TaskBar />
      <div className="pointer-events-none absolute left-[1073px] top-[650px] whitespace-nowrap text-[#8a8f92]/60">
        <div className="text-[18.500px] leading-[24px] tracking-[0.3px]">Activate Windows</div>
        <div className="text-[14px] leading-[22px] tracking-[0.15px]">Go to Settings to activate Windows.</div>
      </div>
    </div>
  );
}
